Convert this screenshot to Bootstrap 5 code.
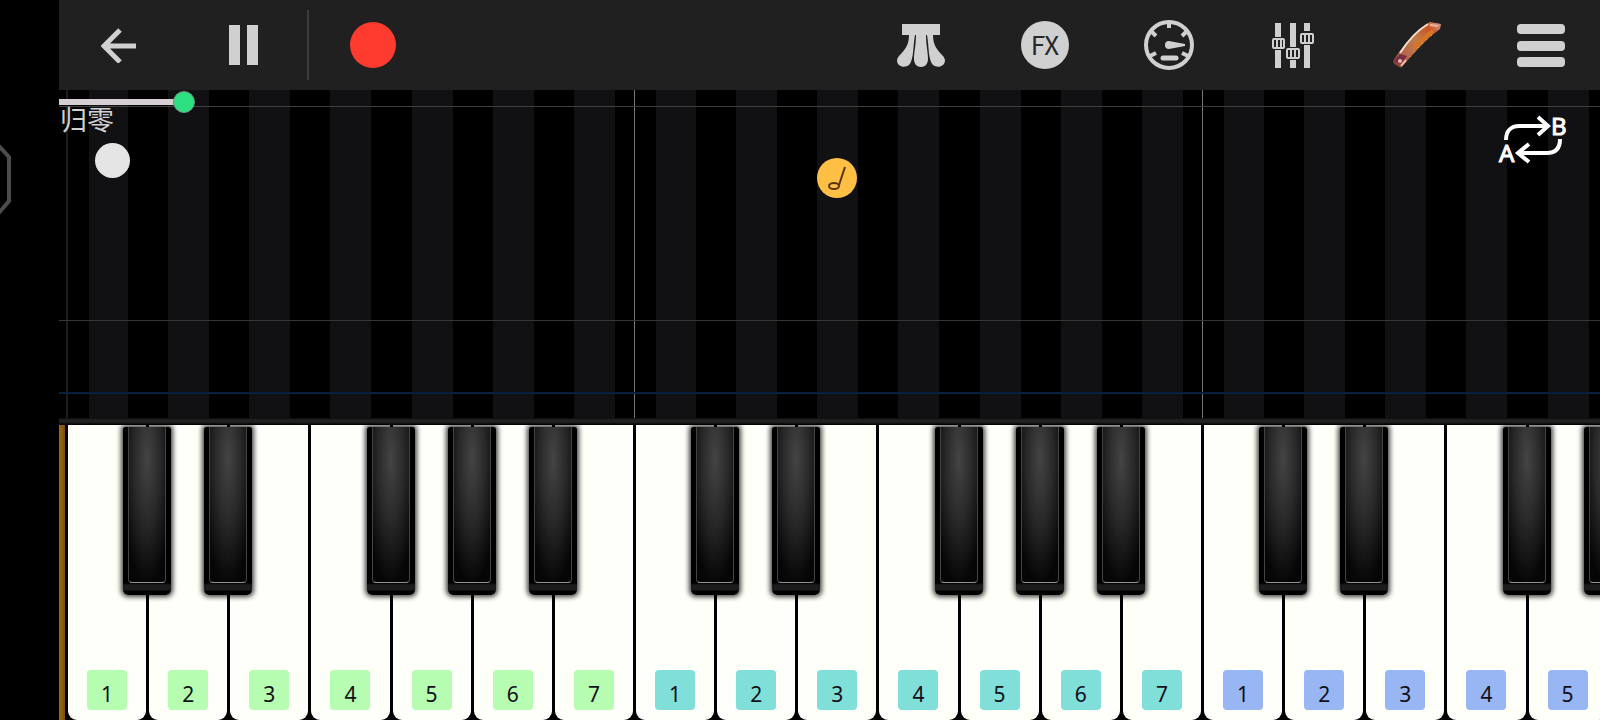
<!DOCTYPE html>
<html lang="zh-CN">
<head>
<meta charset="utf-8">
<meta name="viewport" content="width=device-width, initial-scale=1">
<title>Piano</title>
<link rel="stylesheet" href="https://cdn.jsdelivr.net/npm/bootstrap@5.3.0/dist/css/bootstrap.min.css">
<style>
body { background: #000; color: #d0d0d0; font-family: "Noto Sans", "Noto Sans CJK SC", sans-serif; --key-width: 5.29%; }
.side-strip { width: 59px; flex: none; }
.side-handle { margin-top: 144px; }
.toolbar { background: #202020; height: 90px; flex: none; }
.tool { width: 118px; height: 90px; flex: none; color: #d0d0d0; }
.tool-left { width: 120px; }
.tool svg { display: block; }
.tool-group { gap: 6px; }
.tool-divider { width: 2px; height: 70px; background: #3c3c3c; flex: none; }
.roll { min-height: 328px; }
.lanes { padding-left: 7px; }
.lane { flex: 0 0 var(--key-width); background: linear-gradient(90deg, #000 26%, #111012 26% 76%, #000 76%); }
.lane-octave { border-left: 1px solid #777; }
.lane-first { border-left: 2px solid #1d1d1d; }
.beats { background:
  linear-gradient(#404040, #404040) 0 16px / 100% 1px no-repeat,
  linear-gradient(#363636, #363636) 0 230px / 100% 1px no-repeat,
  linear-gradient(#071a38, #0a2648) 0 302px / 100% 2px no-repeat; }
.roll-panel { width: 136px; }
.reset-btn { font-size: 27px; line-height: 32px; color: #d0d0d0; padding: 0 1px; margin-top: -10px; white-space: nowrap; }
.tempo { appearance: none; -webkit-appearance: none; display: block; width: 100%; height: 24px; margin: 0; background: linear-gradient(#d6d0d4, #d6d0d4) 0 9px / 116px 6px no-repeat; }
.tempo::-webkit-slider-thumb { -webkit-appearance: none; width: 22px; height: 22px; border-radius: 50%; background: #2de080; border: 1px solid #6f8f7c; }
.knob { width: 35px; height: 35px; border-radius: 50%; background: #e5e5e5; margin: 7px 0 0 36px; display: block; }
.note { width: 40px; height: 40px; border-radius: 50%; background: #ffbf45; top: 68px; left: calc(7px + (100% - 7px) * .50255); margin-left: -20px; }
.ab-loop { top: 16px; right: 31px; }
.rail { height: 7px; background: linear-gradient(#111 1px, #252525 2px, #1c1c1c 5px, #000 6px); flex: none; }
.keyboard { height: 295px; flex: none; }
.key-edge { width: 7px; flex: none; background: linear-gradient(90deg, #a0691c, #80500c 80%, #000 85%); }
.key { flex: 0 0 var(--key-width); }
.key-white { width: calc(100% - 3px); height: 100%; margin: 0 1px 0 2px; border: 0; border-radius: 0 0 9px 9px; background: #fffffa; padding: 0 0 10px; }
.key-label { width: 40px; height: 40px; border-radius: 4px; font-size: 21px; line-height: 48px; color: #101018; }
.octave-green { background: #b6fdb2; }
.octave-teal { background: #81dfda; }
.octave-blue { background: #98b5f4; }
.key-black { top: 2px; left: 100%; width: 48px; height: 168px; margin-left: -24px; z-index: 2; border: 0; border-radius: 2px 2px 5px 5px; padding: 0 5px 12px; background: linear-gradient(#000 156px, #1b1b1b 158px, #1b1b1b 163px, #000 164px); box-shadow: 0 0 5px 2px rgba(0,0,0,.75); }
.key-face { height: 156px; border: 1px solid; border-top: 0; border-radius: 0 0 4px 4px; background: radial-gradient(ellipse 26px 125px at 50% 32px, #454444, #2a2929 50%, #060606 100%); border-color: #373737 #444 #929292; }
</style>
</head>
<body>
<div class="d-flex min-vh-100 overflow-hidden">
  <aside class="side-strip">
    <svg class="side-handle d-block" width="14" height="72" fill="none" stroke="#4c4c4c" stroke-width="4"><path d="M-3 0L9 13V57L-3 71"/></svg>
  </aside>
  <main class="d-flex flex-column flex-grow-1 overflow-hidden">
    <header class="toolbar d-flex align-items-center justify-content-between">
      <div class="d-flex align-items-center gap-1">
        <button class="tool tool-left btn p-0 d-flex align-items-center justify-content-center" aria-label="Back">
          <svg width="36" height="36" fill="none" stroke="currentColor" stroke-width="5"><path d="M19 3L3 19L19 35M3 19H35"/></svg>
        </button>
        <button class="tool tool-left btn p-0 d-flex align-items-center justify-content-center" aria-label="Pause">
          <svg width="30" height="40" fill="currentColor"><path d="M1 0h11v40H1zM19 0h11v40H19z"/></svg>
        </button>
        <span class="tool-divider"></span>
        <button class="tool tool-left btn p-0 d-flex align-items-center justify-content-center" aria-label="Record">
          <svg width="46" height="46"><circle cx="23" cy="23" r="23" fill="#ff3b30"/></svg>
        </button>
      </div>
      <div class="tool-group d-flex align-items-center">
        <button class="tool btn p-0 d-flex align-items-center justify-content-center" aria-label="Pedal">
          <svg width="50" height="44" fill="currentColor"><path d="M6 1H44V12H37C37 22 41 27 47 33C53 40 44 47 37 42C32 37 33 22 31 12H30C30 22 32 29 32 36C32 41 29 44 25 44S18 41 18 36C18 29 20 22 20 12H19C17 22 18 37 13 42C6 47-3 40 3 33C9 27 13 22 13 12H6Z"/></svg>
        </button>
        <button class="tool btn p-0 d-flex align-items-center justify-content-center" aria-label="Effects">
          <svg width="48" height="48"><circle cx="24" cy="24" r="24" fill="currentColor"/><text x="24" y="34" text-anchor="middle" font-family="Noto Sans CJK SC, sans-serif" font-size="26" fill="#282828">FX</text></svg>
        </button>
        <button class="tool btn p-0 d-flex align-items-center justify-content-center" aria-label="Metronome">
          <svg width="50" height="50" fill="none" stroke="currentColor" stroke-width="4"><circle cx="25" cy="25" r="23"/><path d="M25 3V8M8 12L12 16M42 12L38 16M6 36L12 33M44 36L38 33"/><path d="M19 38H32" stroke-width="5" stroke-linecap="round"/><path d="M25 21L41 24V26L25 29A4 4 0 0 1 25 21Z" fill="currentColor" stroke="none"/></svg>
        </button>
        <button class="tool btn p-0 d-flex align-items-center justify-content-center" aria-label="Mixer">
          <svg width="42" height="46" fill="none" stroke="currentColor"><path d="M6 1V15M6 28V46M21 1V25M21 38V46M35 1V9M35 23V46" stroke-width="6"/><g stroke-width="2"><rect x="1" y="17" width="11" height="9" rx="1"/><path d="M5 18V25M9 18V25"/><rect x="15" y="27" width="12" height="9" rx="1"/><path d="M19 28V35M23 28V35"/><rect x="29" y="12" width="12" height="9" rx="1"/><path d="M33 13V20M37 13V20"/></g></svg>
        </button>
        <button class="tool btn p-0 d-flex align-items-center justify-content-center" aria-label="Instrument">
          <svg width="50" height="48">
            <defs><linearGradient id="wood" x1="0" y1="1" x2="1" y2="0"><stop offset="0" stop-color="#713139"/><stop offset=".25" stop-color="#b76548"/><stop offset=".55" stop-color="#c17c4b"/><stop offset=".8" stop-color="#c75624"/><stop offset="1" stop-color="#d79b96"/></linearGradient></defs>
            <path d="M1 40C11 25 24 9 38 1L49 3L48 8C33 19 21 33 9 47L2 43Z" fill="url(#wood)"/>
            <path d="M8 32C15 21 26 9 36 3" fill="none" stroke="#f1dfcf" stroke-width="2"/>
            <path d="M22 28Q31 17 41 10" fill="none" stroke="#d87524" stroke-width="4"/>
            <path d="M18 36Q29 22 44 11" fill="none" stroke="#f0d0a0" stroke-dasharray="1 5"/>
            <path d="M2 40L8 33L15 35L9 43Z" fill="#762e46"/><circle cx="8" cy="40" r="2" fill="#eab7ad"/><path d="M9 45L14 39M38 4L46 5" stroke="#edb798" stroke-width="2"/>
          </svg>
        </button>
        <button class="tool btn p-0 d-flex align-items-center justify-content-center" aria-label="Menu">
          <svg width="48" height="44" fill="currentColor"><rect width="48" height="10" y="1" rx="4"/><rect y="18" width="48" height="10" rx="4"/><rect y="34" width="48" height="10" rx="4"/></svg>
        </button>
      </div>
    </header>
    <section class="roll position-relative flex-grow-1 d-flex overflow-hidden">
      <div class="lanes d-flex w-100 overflow-hidden" id="lanes"></div>
      <div class="beats position-absolute top-0 start-0 w-100 h-100"></div>
      <div class="roll-panel position-absolute top-0 start-0">
        <input class="tempo" type="range" aria-label="Progress" min="0" max="100" value="100">
        <button class="reset-btn btn border-0 text-start d-block">归零</button>
        <button class="knob border-0 p-0" aria-label="Handle"></button>
      </div>
      <div class="note position-absolute">
        <svg class="d-block" width="40" height="40" fill="none" stroke="#573509" stroke-width="2"><ellipse cx="17" cy="28" rx="5" ry="3"/><path d="M22 27L28 9"/></svg>
      </div>
      <button class="ab-loop btn border-0 p-0 position-absolute" aria-label="Loop A to B">
        <svg class="d-block" width="72" height="66" fill="none" stroke="#fff" stroke-width="4"><path d="M9 34C9 25 14 20 22 20H51M41 11L51 20L41 29M63 33C63 42 59 47 50 47H21M32 38L21 47L32 56"/><g font-size="24" fill="#fff" stroke-width="1"><text x="2" y="56">A</text><text x="54" y="29">B</text></g></svg>
      </button>
    </section>
    <div class="rail"></div>
    <section class="keyboard d-flex overflow-hidden">
      <div class="key-edge"></div>
      <div class="d-flex flex-grow-1" id="keys"></div>
    </section>
  </main>
</div>
<script src="https://cdn.jsdelivr.net/npm/bootstrap@5.3.0/dist/js/bootstrap.bundle.min.js"></script>
<script>
const octaves = ['green', 'teal', 'blue'];
const lanes = document.getElementById('lanes');
const keys = document.getElementById('keys');
for (let i = 0; i < 19; i++) {
  const degree = i % 7 + 1;
  const octave = octaves[Math.floor(i / 7)];
  const line = i === 0 ? ' lane-first' : degree === 1 ? ' lane-octave' : '';
  const black = degree === 3 || degree === 7 ? '' :
    '<button class="key-black position-absolute" aria-label="' + degree + ' sharp"><span class="key-face d-block"></span></button>';
  lanes.insertAdjacentHTML('beforeend', '<div class="lane' + line + '"></div>');
  keys.insertAdjacentHTML('beforeend',
    '<div class="key position-relative"><button class="key-white d-flex align-items-end justify-content-center">' +
    '<span class="key-label octave-' + octave + '">' + degree + '</span></button>' + black + '</div>');
}
</script>
</body>
</html>
